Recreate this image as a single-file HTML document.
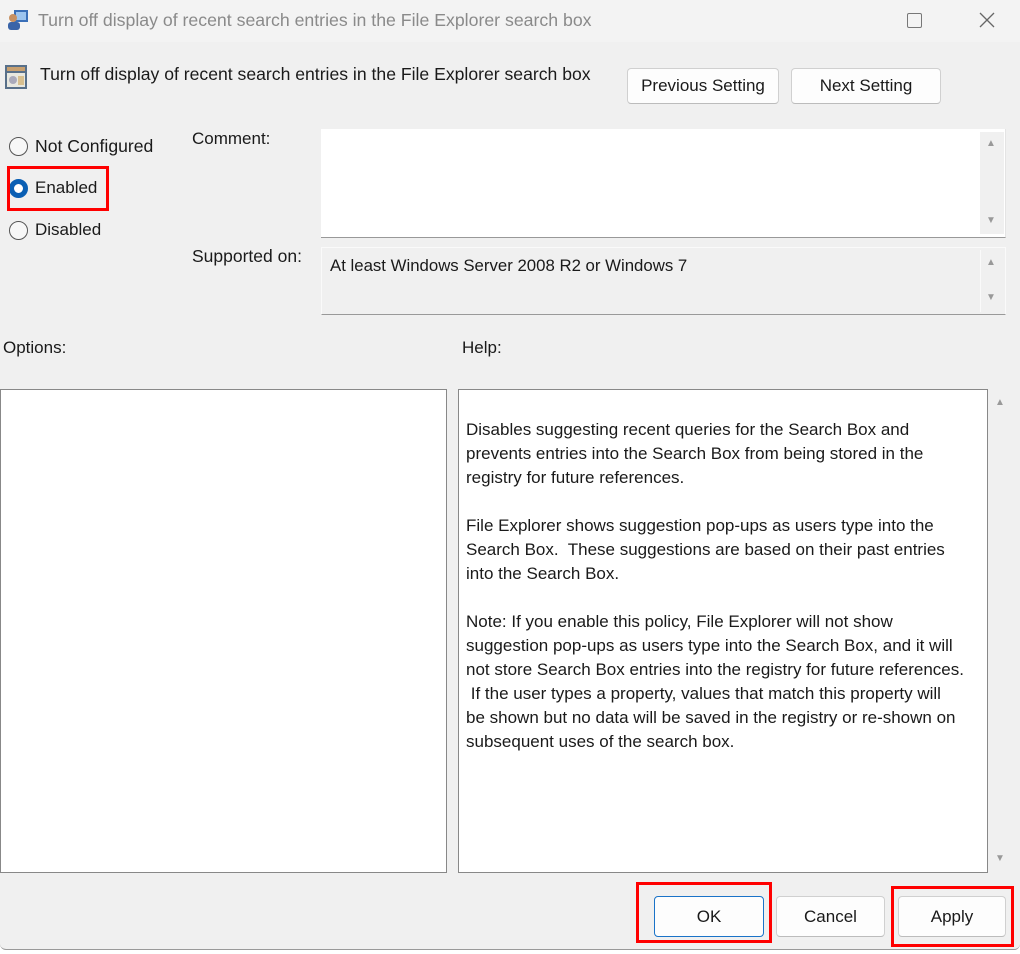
<!DOCTYPE html>
<html><head><meta charset="utf-8"><style>
*{margin:0;padding:0;box-sizing:border-box}
body{width:1020px;height:954px;background:#fff;font-family:"Liberation Sans",sans-serif;position:relative;overflow:hidden;color:#1a1a1a}
.win{position:absolute;left:0;top:0;width:1020px;height:950px;background:#f0f0f0;border-bottom:1px solid #999;border-radius:0 0 6px 6px}
.tb{position:absolute;left:0;top:0;width:1020px;height:42px;background:#f3f3f3}
.a{position:absolute;white-space:nowrap}
.t17{font-size:17px}
.btn{position:absolute;background:#fdfdfd;border:1px solid #d0d0d0;border-bottom-color:#bcbcbc;border-radius:4px;font-size:17px;text-align:center}
.red{position:absolute;border:3px solid #f00}
.radio{position:absolute;width:19px;height:19px;border:1.5px solid #555;border-radius:50%;background:#f7f7f7}
.box{position:absolute;background:#fff;border:1px solid #888}
.arr{position:absolute;font-size:10px;color:#999}
.help{position:absolute;left:466px;top:418px;font-size:17px;line-height:24px;white-space:nowrap;color:#1a1a1a}
</style></head><body>
<div class="win">
<div class="tb"></div>
<svg class="a" style="left:6px;top:8px" width="24" height="24"><rect x="8" y="2" width="14" height="12" fill="#3a6fb8"/><rect x="10" y="4" width="10" height="8" fill="#9cc4ee"/><circle cx="7" cy="10" r="4" fill="#c89060"/><rect x="2" y="14" width="12" height="8" rx="3" fill="#3a64a8"/></svg>
<div class="a" style="left:38px;top:10px;font-size:17.7px;color:#8a8a8a">Turn off display of recent search entries in the File Explorer search box</div>
<div class="a" style="left:907px;top:13px;width:15px;height:15px;border:1.5px solid #777;border-radius:2px"></div>
<svg class="a" style="left:978px;top:11px" width="18" height="18"><path d="M2 2L16 16M16 2L2 16" stroke="#666" stroke-width="1.3"/></svg>
<svg class="a" style="left:4px;top:64px" width="24" height="26"><rect x="1" y="1" width="22" height="24" fill="#58708a"/><rect x="3" y="3" width="18" height="4" fill="#c8a070"/><rect x="3" y="9" width="18" height="14" fill="#e8e8e0"/><circle cx="9" cy="16" r="4" fill="#aab"/><rect x="14" y="12" width="6" height="9" fill="#d8c090"/></svg>
<div class="a" style="left:40px;top:64px;font-size:17.6px">Turn off display of recent search entries in the File Explorer search box</div>
<div class="btn" style="left:627px;top:68px;width:152px;height:36px;line-height:34px">Previous Setting</div>
<div class="btn" style="left:791px;top:68px;width:150px;height:36px;line-height:34px">Next Setting</div>
<div class="radio" style="left:9px;top:137px"></div>
<div class="a" style="left:35px;top:136px;font-size:17.6px">Not Configured</div>
<div class="radio" style="left:9px;top:179px;border:5px solid #0a5fb4;background:#fff"></div>
<div class="a t17" style="left:35px;top:178px">Enabled</div>
<div class="radio" style="left:9px;top:221px"></div>
<div class="a t17" style="left:35px;top:220px">Disabled</div>
<div class="red" style="left:7px;top:166px;width:102px;height:45px"></div>
<div class="a t17" style="left:192px;top:129px">Comment:</div>
<div class="a" style="left:321px;top:129px;width:685px;height:109px;background:#fff;border-bottom:1px solid #999;border-right:1px solid #e4e4e4"></div>
<div class="a" style="left:980px;top:132px;width:24px;height:102px;background:#f0f0f0"></div>
<div class="arr" style="left:986px;top:138px">▲</div>
<div class="arr" style="left:986px;top:215px">▼</div>
<div class="a" style="left:192px;top:246px;font-size:17.5px">Supported on:</div>
<div class="a" style="left:321px;top:247px;width:685px;height:68px;background:#f0f0f0;border:1px solid #fafafa;border-bottom:1px solid #999"></div>
<div class="a" style="left:980px;top:250px;width:1px;height:62px;background:#fafafa"></div>
<div class="a" style="left:330px;top:256px;font-size:16.8px">At least Windows Server 2008 R2 or Windows 7</div>
<div class="arr" style="left:986px;top:257px">▲</div>
<div class="arr" style="left:986px;top:292px">▼</div>
<div class="a t17" style="left:3px;top:338px">Options:</div>
<div class="a t17" style="left:462px;top:338px">Help:</div>
<div class="box" style="left:0;top:389px;width:447px;height:484px"></div>
<div class="box" style="left:458px;top:389px;width:530px;height:484px"></div>
<div class="arr" style="left:995px;top:397px">▲</div>
<div class="arr" style="left:995px;top:853px">▼</div>
<div class="help">Disables suggesting recent queries for the Search Box and<br>prevents entries into the Search Box from being stored in the<br>registry for future references.<br><br>File Explorer shows suggestion pop-ups as users type into the<br>Search Box.&nbsp; These suggestions are based on their past entries<br>into the Search Box.<br><br>Note: If you enable this policy, File Explorer will not show<br>suggestion pop-ups as users type into the Search Box, and it will<br>not store Search Box entries into the registry for future references.<br>&nbsp;If the user types a property, values that match this property will<br>be shown but no data will be saved in the registry or re-shown on<br>subsequent uses of the search box.</div>
<div class="btn" style="left:654px;top:896px;width:110px;height:41px;line-height:39px;border:1px solid #1a73c8">OK</div>
<div class="btn" style="left:776px;top:896px;width:109px;height:41px;line-height:39px">Cancel</div>
<div class="btn" style="left:898px;top:896px;width:108px;height:41px;line-height:39px">Apply</div>
<div class="red" style="left:636px;top:882px;width:136px;height:61px"></div>
<div class="red" style="left:891px;top:886px;width:123px;height:61px"></div>
</div>
</body></html>
